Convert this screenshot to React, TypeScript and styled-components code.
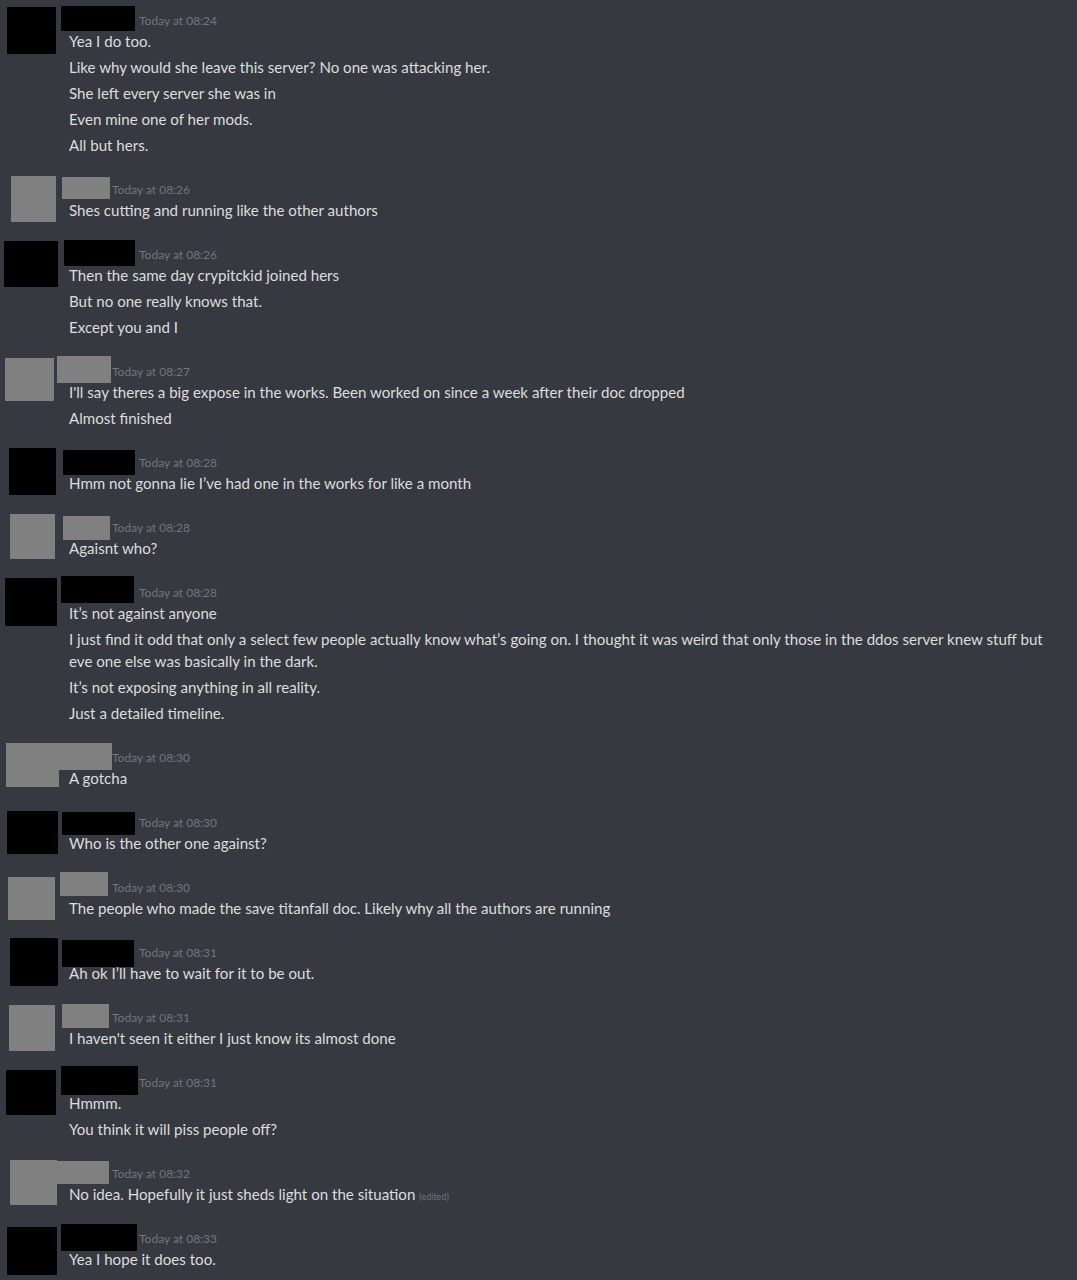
import React from 'react';
import styled, { createGlobalStyle } from 'styled-components';

const GlobalStyle = createGlobalStyle`
  html, body {
    margin: 0;
    padding: 0;
    background: #36393f;
  }
  body {
    font-family: Lato, "Open Sans", "Noto Sans", sans-serif;
    -webkit-font-smoothing: antialiased;
  }
`;

const Chat = styled.div`
  display: flex;
  flex-direction: column;
  gap: 23px;
  min-height: 1280px;
  box-sizing: border-box;
  padding: 10px 17px 0 0;
  background: #36393f;
`;

const Group = styled.div`
  display: grid;
  grid-template-columns: 69px 1fr;
  grid-template-rows: 20px auto;
`;

const AvatarSlot = styled.div`
  position: relative;
  grid-row: 1 / span 2;
`;

// redaction box lying over the avatar / username
const Mask = styled.div<{ $tone: 'black' | 'gray' }>`
  position: absolute;
  background: ${({ $tone }) => ($tone === 'black' ? '#000000' : '#808080')};
`;

const Header = styled.div`
  display: flex;
  align-items: center;
  height: 20px;
`;

const NameSlot = styled.div<{ $w: number }>`
  position: relative;
  flex: none;
  width: ${({ $w }) => $w}px;
  height: 20px;
`;

const Timestamp = styled.span`
  color: #72767d;
  font-size: 12px;
  line-height: 20px;
  padding-top: 2px;
  white-space: nowrap;
`;

const Body = styled.div`
  grid-column: 2;
  display: flex;
  flex-direction: column;
  gap: 4px;
`;

const Line = styled.div`
  color: #dcddde;
  font-size: 15.1px;
  line-height: 22px;
`;

const Edited = styled.span`
  color: #72767d;
  font-size: 9px;
  line-height: 1;
  margin-left: 4px;
`;

type Box = [number, number, number, number]; // x, dy, w, h

interface Msg {
  tone: 'black' | 'gray';
  time: string;
  avatar: Box;
  name: Box;
  lines: string[];
  edited?: boolean;
}

const messages: Msg[] = [
  {
    tone: 'black', time: '08:24', avatar: [7, -3, 49, 47], name: [61, -4, 74, 25],
    lines: [
      'Yea I do too.',
      'Like why would she leave this server? No one was attacking her.',
      'She left every server she was in',
      'Even mine one of her mods.',
      'All but hers.',
    ],
  },
  { tone: 'gray', time: '08:26', avatar: [11, -3, 45, 46], name: [62, -2, 48, 22], lines: ['Shes cutting and running like the other authors'] },
  {
    tone: 'black', time: '08:26', avatar: [4, -3, 54, 46], name: [64, -4, 71, 26],
    lines: ['Then the same day crypitckid joined hers', 'But no one really knows that.', 'Except you and I'],
  },
  {
    tone: 'gray', time: '08:27', avatar: [5, -3, 49, 43], name: [57, -5, 54, 27],
    lines: ["I'll say theres a big expose in the works. Been worked on since a week after their doc dropped", 'Almost finished'],
  },
  { tone: 'black', time: '08:28', avatar: [9, -4, 47, 47], name: [63, -2, 72, 25], lines: ['Hmm not gonna lie I\u2019ve had one in the works for like a month'] },
  { tone: 'gray', time: '08:28', avatar: [10, -3, 45, 45], name: [63, -1, 47, 24], lines: ['Agaisnt who?'] },
  {
    tone: 'black', time: '08:28', avatar: [5, -4, 52, 48], name: [61, -6, 73, 27],
    lines: [
      'It\u2019s not against anyone',
      'I just find it odd that only a select few people actually know what\u2019s going on. I thought it was weird that only those in the ddos server knew stuff but eve one else was basically in the dark.',
      'It\u2019s not exposing anything in all reality.',
      'Just a detailed timeline.',
    ],
  },
  { tone: 'gray', time: '08:30', avatar: [6, -4, 53, 44], name: [59, -4, 53, 27], lines: ['A gotcha'] },
  { tone: 'black', time: '08:30', avatar: [7, -1, 51, 43], name: [62, 0, 73, 23], lines: ['Who is the other one against?'] },
  { tone: 'gray', time: '08:30', avatar: [8, 0, 47, 43], name: [60, -5, 48, 24], lines: ['The people who made the save titanfall doc. Likely why all the authors are running'] },
  { tone: 'black', time: '08:31', avatar: [10, -4, 48, 48], name: [62, -2, 72, 27], lines: ['Ah ok I\u2019ll have to wait for it to be out.'] },
  { tone: 'gray', time: '08:31', avatar: [9, -2, 46, 46], name: [62, -3, 47, 24], lines: ["I haven't seen it either I just know its almost done"] },
  { tone: 'black', time: '08:31', avatar: [6, -2, 50, 45], name: [61, -6, 77, 29], lines: ['Hmmm.', 'You think it will piss people off?'] },
  { tone: 'gray', time: '08:32', avatar: [10, -3, 47, 45], name: [57, -2, 52, 23], lines: ['No idea. Hopefully it just sheds light on the situation'], edited: true },
  { tone: 'black', time: '08:33', avatar: [7, -1, 50, 48], name: [61, -4, 76, 27], lines: ['Yea I hope it does too.'] },
];

const CONTENT_X = 69;

const MessageGroup: React.FC<{ msg: Msg }> = ({ msg }) => {
  const [ax, ady, aw, ah] = msg.avatar;
  const [nx, ndy, nw, nh] = msg.name;
  const slotWidth = msg.tone === 'black' ? 70 : 43;
  return (
    <Group>
      <AvatarSlot>
        <Mask $tone={msg.tone} style={{ left: ax, top: ady, width: aw, height: ah }} />
      </AvatarSlot>
      <Header>
        <NameSlot $w={slotWidth}>
          <Mask $tone={msg.tone} style={{ left: nx - CONTENT_X, top: ndy, width: nw, height: nh }} />
        </NameSlot>
        <Timestamp>Today at {msg.time}</Timestamp>
      </Header>
      <Body>
        {msg.lines.map((text, i) => (
          <Line key={i}>
            {text}
            {msg.edited && i === msg.lines.length - 1 && <Edited>(edited)</Edited>}
          </Line>
        ))}
      </Body>
    </Group>
  );
};

export default function App() {
  return (
    <>
      <GlobalStyle />
      <Chat>
        {messages.map((m, i) => (
          <MessageGroup key={i} msg={m} />
        ))}
      </Chat>
    </>
  );
}
